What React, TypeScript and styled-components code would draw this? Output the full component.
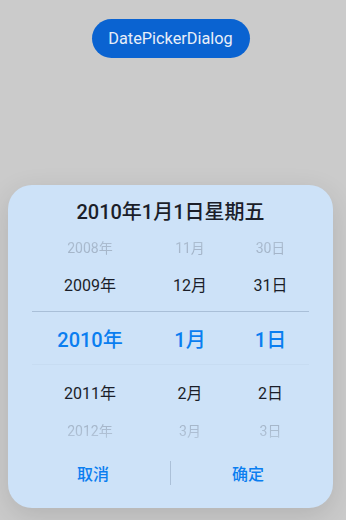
import React from "react";
import styled, { createGlobalStyle } from "styled-components";

const Global = createGlobalStyle`
  html, body { margin: 0; padding: 0; background: #cbcbcb; }
  body { font-family: Roboto, "Noto Sans CJK SC", sans-serif; }
`;

const Page = styled.div`
  width: 341px;
  height: 520px;
  display: flex;
  flex-direction: column;
  align-items: center;
`;

const OpenButton = styled.button`
  margin-top: 19px;
  height: 39px;
  width: 158px;
  border: none;
  border-radius: 20px;
  background: #0a63d1;
  color: #e8eef8;
  font-family: Roboto, "Noto Sans CJK SC", sans-serif;
  font-size: 16.3px;
  padding: 0;
`;

const Dialog = styled.div`
  margin-top: auto;
  margin-bottom: 12px;
  width: 325px;
  height: 323px;
  box-sizing: border-box;
  border-radius: 24px;
  background: #cde2f8;
  box-shadow: 0 8px 28px rgba(0, 0, 0, 0.12);
  display: flex;
  flex-direction: column;
  padding: 15px 24px 15px;
`;

const Title = styled.div`
  text-align: center;
  font-size: 20px;
  line-height: 24px;
  font-weight: 500;
  color: #1b1e29;
  height: 32px;
`;

const Picker = styled.div`
  display: grid;
  grid-template-columns: 116px 84px 1fr;
  height: 209px;
  overflow: hidden;
`;

const Wheel = styled.div`
  display: flex;
  flex-direction: column;
`;

type Pos = "far-top" | "near-top" | "selected" | "near-bottom" | "far-bottom";

const heights: Record<Pos, number> = {
  "far-top": 30,
  "near-top": 44,
  selected: 54,
  "near-bottom": 54,
  "far-bottom": 22,
};

const Item = styled.div<{ $pos: Pos }>`
  height: ${(p) => heights[p.$pos]}px;
  flex: none;
  display: flex;
  align-items: center;
  justify-content: center;
  box-sizing: border-box;
  white-space: nowrap;
  font-size: ${(p) =>
    p.$pos === "selected" ? 20 : p.$pos.startsWith("far") ? 14 : 16}px;
  font-weight: ${(p) => (p.$pos === "selected" ? 500 : 400)};
  color: ${(p) =>
    p.$pos === "selected"
      ? "#0a7ef0"
      : p.$pos.startsWith("far")
      ? "#9fafc2"
      : "#1b1e29"};
  ${(p) =>
    p.$pos === "selected"
      ? `border-top: 1px solid #a9bfd8; border-bottom: 1px solid #c7dcf2; margin-top: 5px;`
      : ""}
  ${(p) =>
    p.$pos === "far-top"
      ? `-webkit-mask-image: linear-gradient(to bottom, rgba(0,0,0,0.6), #000);`
      : p.$pos === "far-bottom"
      ? `align-items: flex-end; line-height: 20px; -webkit-mask-image: linear-gradient(to bottom, #000, rgba(0,0,0,0.5));`
      : ""}
`;

const Actions = styled.div`
  margin: auto -16px 0;
  height: 40px;
  display: grid;
  grid-template-columns: 1fr 1px 1fr;
  align-items: center;
`;

const ActionButton = styled.button`
  border: none;
  background: transparent;
  height: 40px;
  font-family: Roboto, "Noto Sans CJK SC", sans-serif;
  font-size: 16px;
  font-weight: 500;
  color: #0a7ef0;
  padding: 0;
`;

const Separator = styled.div`
  width: 1px;
  height: 24px;
  background: #abc0d8;
`;

const columns: string[][] = [
  ["2008年", "2009年", "2010年", "2011年", "2012年"],
  ["11月", "12月", "1月", "2月", "3月"],
  ["30日", "31日", "1日", "2日", "3日"],
];

const positions: Pos[] = [
  "far-top",
  "near-top",
  "selected",
  "near-bottom",
  "far-bottom",
];

export default function App() {
  return (
    <>
      <Global />
      <Page>
        <OpenButton>DatePickerDialog</OpenButton>
        <Dialog>
          <Title>2010年1月1日星期五</Title>
          <Picker>
            {columns.map((col, ci) => (
              <Wheel key={ci}>
                {col.map((v, i) => (
                  <Item key={v} $pos={positions[i]}>
                    {v}
                  </Item>
                ))}
              </Wheel>
            ))}
          </Picker>
          <Actions>
            <ActionButton>取消</ActionButton>
            <Separator />
            <ActionButton>确定</ActionButton>
          </Actions>
        </Dialog>
      </Page>
    </>
  );
}
